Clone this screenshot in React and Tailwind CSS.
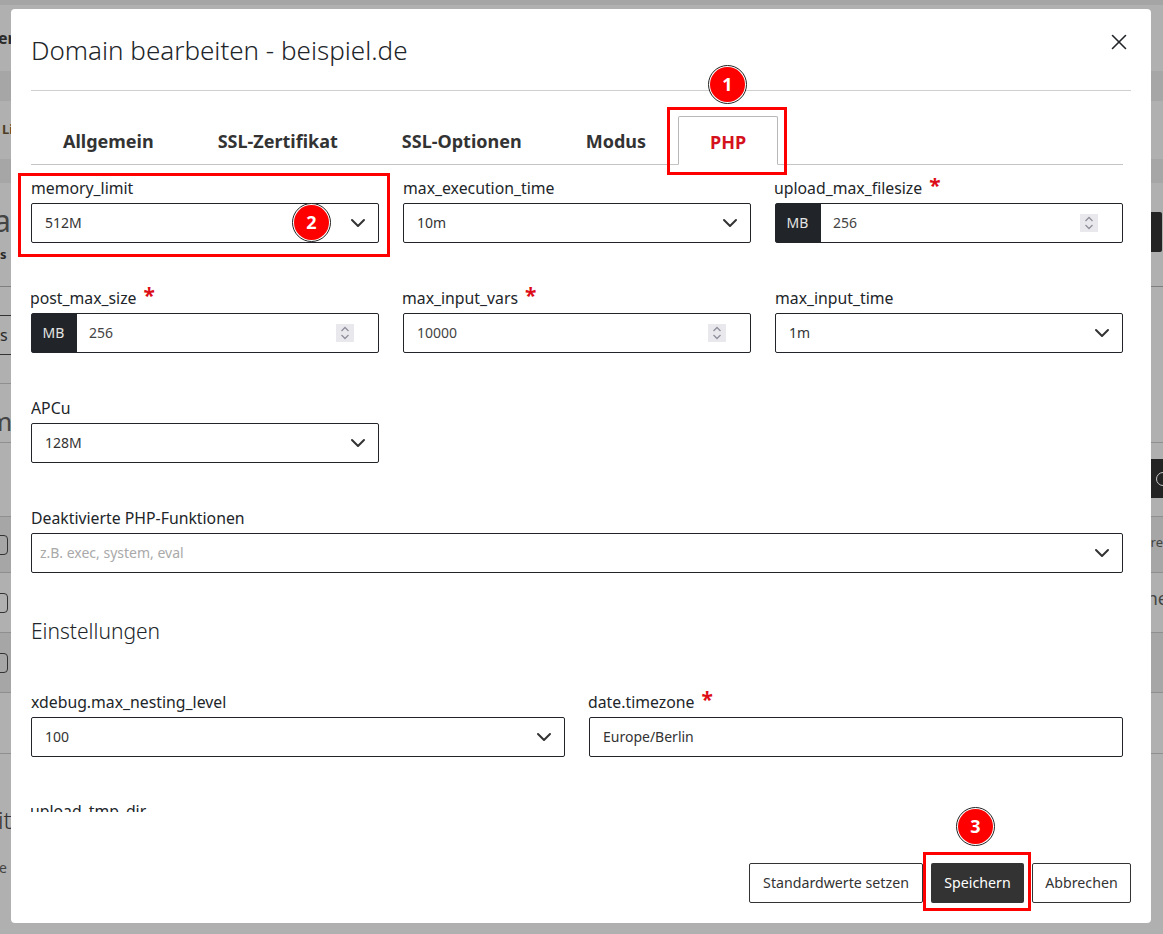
import React from 'react';
import { ChevronDown, X } from 'lucide-react';

const FONT = "font-['Noto_Sans',sans-serif]";

function Label({ text, required }) {
    return (
        <label className={`flex h-[22px] items-center pb-[2px] text-[15.800px] leading-[22px] text-[#212529] ${required ? '-ml-px' : ''}`}>
            {text}
            {required && <span className="relative -top-[3px] ml-[7px] text-[21px] font-bold leading-none text-[#dc0d17]">*</span>}
        </label>
    );
}

function Select({ label, value, placeholder, required }) {
    return (
        <div className="flex flex-col gap-[3px]">
            <Label text={label} required={required} />
            <div className="flex h-[40px] items-center justify-between rounded-[2px] border border-[#212529] bg-white">
                {placeholder
                    ? <span className="pb-[2px] pl-[8px] text-[14px] text-[#a9a9a9]">{placeholder}</span>
                    : <span className="pb-[2px] pl-[13px] text-[14px] text-[#333333]">{value}</span>}
                <ChevronDown size={24} strokeWidth={2} className="mr-[8px] text-[#333333]" />
            </div>
        </div>
    );
}

function NumberField({ label, value, required, unit }) {
    return (
        <div className="flex flex-col gap-[3px]">
            <Label text={label} required={required} />
            <div className="flex h-[40px] items-center rounded-[2px] border border-[#212529] bg-white">
                {unit && <div className="flex h-full w-[45px] items-center justify-center bg-[#212529] pr-[2px] pb-[2px] text-[14px] text-[#e4e4e4]">{unit}</div>}
                <span className={`flex-1 pb-[2px] text-[14px] text-[#444444] ${unit ? 'ml-[12px]' : 'ml-[13px]'}`}>{value}</span>
                <div className="mr-[24px] flex h-[18px] w-[18px] items-center justify-center bg-[#e9e9ed]">
                    <svg width="10" height="14" viewBox="0 0 10 14" fill="none" stroke="#8f8f9d" strokeWidth="1.3">
                        <path d="M1.5 5 5 1.5 8.500 5" />
                        <path d="M1.500 9 5 12.500 8.500 9" />
                    </svg>
                </div>
            </div>
        </div>
    );
}

function TextField({ label, value, required }) {
    return (
        <div className="flex flex-col gap-[3px]">
            <Label text={label} required={required} />
            <div className="flex h-[40px] items-center rounded-[2px] border border-[#212529] bg-white pb-[2px] pl-[13px] text-[14px] text-[#333333]">
                {value}
            </div>
        </div>
    );
}

function Badge({ n, className }) {
    return (
        <div className={`absolute flex h-[39px] w-[39px] items-center justify-center rounded-full border border-[#222222] bg-white ${className}`}>
            <div className="flex h-[35px] w-[35px] items-center justify-center rounded-full bg-[#ff0000] text-[18px] font-bold text-white">{n}</div>
        </div>
    );
}

// page behind the dialog, only its edges stay visible
function Backdrop() {
    return (
        <div className="flex h-[934px] flex-col overflow-hidden bg-[#b0b0b0] text-[#2a2a2a]">
            <div className="h-[5px] shrink-0 bg-[#a5a5a5]" />
            <div className="flex h-[66px] shrink-0 items-center">
                <span className="-ml-[2px] text-[16px] font-bold">er</span>
            </div>
            <div className="h-[30px] shrink-0 bg-[#a6a6a6]" />
            <div className="flex h-[58px] shrink-0 items-center">
                <span className="ml-[2px] text-[13px] font-bold text-[#4d3d22]">Li</span>
            </div>
            <div className="h-[24px] shrink-0 bg-[#a6a6a6]" />
            <div className="flex h-[104px] shrink-0 justify-between border-b border-[#7f7f7f]">
                <div className="w-[11px] overflow-hidden">
                    <div className="mt-[18px] -ml-[6px] text-[30px] leading-[40px] text-[#444444]">a</div>
                    <div className="mt-[3px] text-[13px] font-bold leading-[20px]">s</div>
                </div>
                <div className="mt-[29px] mr-px h-[40px] w-[11px] rounded-r-[2px] bg-[#242424]" />
            </div>
            <div className="flex h-[156px] shrink-0 justify-between border-b border-[#8f8f8f]">
                <div className="flex w-[11px] flex-col overflow-hidden">
                    <div className="mt-[28px] flex h-[40px] shrink-0 items-center whitespace-nowrap border-y border-[#333333] text-[16px]">s '</div>
                    <div className="h-[29px] shrink-0 border-b border-[#8f8f8f]" />
                    <div className="mt-[22px] -ml-[12px] text-[26px] leading-[30px] text-[#444444]">m</div>
                </div>
            </div>
            <div className="flex h-[73px] shrink-0 items-end justify-end">
                <div className="mb-[18px] flex h-[39px] w-[12px] items-center overflow-hidden bg-[#242424] pl-[5px]">
                    <div className="h-[14px] w-[14px] shrink-0 rounded-full border border-[#c8c8c8]" />
                </div>
            </div>
            <div className="flex h-[57px] shrink-0 items-center justify-between border-y border-[#8f8f8f] bg-[#a6a6a6]">
                <div className="-ml-[10px] h-[20px] w-[18px] rounded-[4px] border border-[#333333]" />
                <span className="pb-[4px] text-[13px] text-[#444444]">re</span>
            </div>
            <div className="flex h-[60px] shrink-0 items-center justify-between border-b border-[#8f8f8f]">
                <div className="-ml-[10px] h-[20px] w-[18px] rounded-[4px] border border-[#333333]" />
                <span className="-mr-[5px] pb-[8px] text-[18px] text-[#444444]">ne</span>
            </div>
            <div className="flex h-[60px] shrink-0 items-center justify-between border-b border-[#8f8f8f] bg-[#a6a6a6]">
                <div className="-ml-[10px] h-[20px] w-[18px] rounded-[4px] border border-[#333333]" />
            </div>
            <div className="h-[61px] shrink-0 border-b border-[#8f8f8f]" />
            <div className="flex h-[81px] shrink-0 items-end">
                <span className="-ml-[2px] text-[24px] font-light leading-[30px] text-[#333333]">it</span>
            </div>
            <div className="mt-[23px] -ml-[1px] text-[14px] leading-[20px] text-[#444444]">e</div>
        </div>
    );
}

export default function App() {
    return (
        <div className={`relative h-[934px] overflow-hidden ${FONT}`}>
            <Backdrop />

            <div className="absolute top-[9px] left-[11px] flex h-[914px] w-[1140px] flex-col rounded-[4px] bg-white">
                {/* header */}
                <div className="mx-[20px] flex h-[82px] shrink-0 items-start justify-between border-b border-[#cfcfcf]">
                    <h2 className="mt-[21px] text-[26px] font-[350] leading-[40px] text-[#212529]">Domain bearbeiten - beispiel.de</h2>
                    <X size={26} strokeWidth={1.5} className="mt-[20px] -mr-px text-[#212529]" />
                </div>

                <div className="flex min-h-0 flex-1 flex-col pr-[28px] pl-[20px]">
                    {/* tabs */}
                    <div className="mt-[25px] flex h-[49px] shrink-0 border-b border-[#c4c4c4] text-[18px] font-bold text-[#333333]">
                        <div className="flex items-center px-[32px] pt-[3px]">Allgemein</div>
                        <div className="flex items-center px-[32px] pt-[3px]">SSL-Zertifikat</div>
                        <div className="flex items-center px-[32px] pt-[3px]">SSL-Optionen</div>
                        <div className="flex items-center px-[32px] pt-[3px]">Modus</div>
                        <div className="-mb-px flex items-center rounded-t-[2px] border border-b-white border-[#b8b8b8] bg-white px-[31px] pt-[3px] text-[#d4111c]">PHP</div>
                    </div>

                    {/* scrolling form */}
                    <div className="mt-[13px] flex h-[634px] shrink-0 flex-col overflow-hidden">
                        <div className="grid grid-cols-3 gap-x-[24px] gap-y-[45px]">
                            <Select label="memory_limit" value="512M" />
                            <Select label="max_execution_time" value="10m" />
                            <NumberField label="upload_max_filesize" value="256" unit="MB" required />
                            <NumberField label="post_max_size" value="256" unit="MB" required />
                            <NumberField label="max_input_vars" value="10000" required />
                            <Select label="max_input_time" value="1m" />
                            <Select label="APCu" value="128M" />
                        </div>
                        <div className="mt-[45px]">
                            <Select label="Deaktivierte PHP-Funktionen" placeholder="z.B. exec, system, eval" />
                        </div>
                        <h3 className="mt-[41px] text-[21px] font-[350] leading-[34px] text-[#212529]">Einstellungen</h3>
                        <div className="mt-[44px] grid grid-cols-2 gap-x-[24px]">
                            <Select label="xdebug.max_nesting_level" value="100" />
                            <TextField label="date.timezone" value="Europe/Berlin" required />
                        </div>
                        <div className="mt-[44px] -ml-px shrink-0">
                            <Label text="upload_tmp_dir" />
                        </div>
                    </div>
                </div>

                {/* footer */}
                <div className="flex shrink-0 justify-end gap-[8px] pr-[20px] pb-[20px] text-[14.200px]">
                    <button className="h-[40px] w-[174px] rounded-[2px] border border-[#333333] bg-white text-[#333333]">Standardwerte setzen</button>
                    <button className="h-[40px] w-[93px] rounded-[2px] bg-[#333333] text-white">Speichern</button>
                    <button className="h-[40px] w-[99px] rounded-[2px] border border-[#333333] bg-white text-[#333333]">Abbrechen</button>
                </div>
            </div>

            {/* red callouts */}
            <div className="absolute top-[107px] left-[667px] h-[68px] w-[120px] border-[3px] border-[#ff0000]" />
            <div className="absolute top-[173px] left-[18px] h-[84px] w-[372px] border-[3px] border-[#ff0000]" />
            <div className="absolute top-[852px] left-[923px] h-[59px] w-[108px] border-[3px] border-[#ff0000]" />
            <Badge n="1" className="top-[65px] left-[708px]" />
            <Badge n="2" className="top-[203px] left-[292px]" />
            <Badge n="3" className="top-[807px] left-[956px]" />
        </div>
    );
}
